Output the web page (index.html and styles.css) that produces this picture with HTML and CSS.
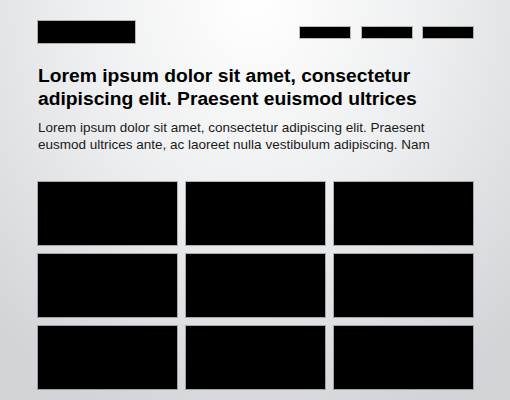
FILE: index.html
```html
<!DOCTYPE html>
<html lang="en">
<head>
  <meta charset="UTF-8">
  <meta name="viewport" content="width=device-width, initial-scale=1.0">
  <title>Wireframe</title>
  <link rel="stylesheet" href="styles.css">
</head>
<body>
  <div class="container">
    <header class="header">
      <div class="logo"></div>
      <nav class="nav">
        <span class="nav-item"></span>
        <span class="nav-item"></span>
        <span class="nav-item"></span>
      </nav>
    </header>
    <h1>Lorem ipsum dolor sit amet, consectetur adipiscing elit. Praesent euismod ultrices</h1>
    <p class="intro">Lorem ipsum dolor sit amet, consectetur adipiscing elit. Praesent eusmod ultrices ante, ac laoreet nulla vestibulum adipiscing. Nam</p>
    <div class="grid">
      <div class="tile"></div>
      <div class="tile"></div>
      <div class="tile"></div>
      <div class="tile"></div>
      <div class="tile"></div>
      <div class="tile"></div>
      <div class="tile"></div>
      <div class="tile"></div>
      <div class="tile"></div>
    </div>
  </div>
</body>
</html>
```
FILE: styles.css
```css
html {
  height: 100%;
}
body {
  font-family: "Liberation Sans", Arial, sans-serif;
  margin: 0;
  min-height: 100%;
  color: #000;
  background: radial-gradient(ellipse 75% 110% at 50% 0%, #ffffff 0%, #eeeff0 45%, #d2d4d8 100%);
}
.container {
  width: 435px;
  padding: 21px 0 0 38px;
}
.header {
  display: flex;
  justify-content: space-between;
  align-items: center;
}
.logo {
  width: 97px;
  height: 22px;
  background: #000;
  box-shadow: 0 0 0 1px rgba(0, 0, 0, 0.25);
}
.nav {
  display: flex;
  gap: 11.5px;
}
.nav-item {
  width: 50px;
  height: 11px;
  background: #000;
  box-shadow: 0 0 0 1px rgba(0, 0, 0, 0.25);
}
h1 {
  font-size: 19.25px;
  line-height: 23px;
  font-weight: bold;
  margin: 21px 0 9px;
}
.intro {
  font-size: 13.5px;
  line-height: 17px;
  color: #1a1a1a;
  max-width: 420px;
  margin: 0 0 29px;
}
.grid {
  display: grid;
  grid-template-columns: repeat(3, 1fr);
  grid-auto-rows: 63px;
  column-gap: 9px;
  row-gap: 9px;
}
.tile {
  background: #000;
  box-shadow: 0 0 0 1px rgba(0, 0, 0, 0.25);
}
```
